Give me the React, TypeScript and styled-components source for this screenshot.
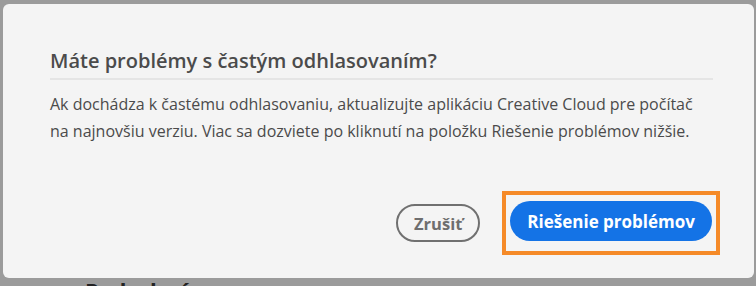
import React from "react";
import styled, { createGlobalStyle } from "styled-components";

const GlobalStyle = createGlobalStyle`
    html, body {
        margin: 0;
        padding: 0;
        background: #9b9b9b;
        overflow: hidden;
    }
    body {
        font-family: "Open Sans", "Noto Sans", sans-serif;
    }
`;

const Page = styled.div`
    display: flex;
    flex-flow: column;
    padding: 4px 2px 0 3px;
`;

const Dialog = styled.div`
    display: flex;
    flex-flow: column;
    width: 751px;
    height: 274px;
    box-sizing: border-box;
    background: #f4f4f4;
    border-radius: 6px;
    padding: 44px 41px 0 47px;
`;

const Title = styled.h2`
    margin: 0;
    font-size: 20px;
    font-weight: 600;
    color: #4b4b4b;
    line-height: 26px;
    padding-bottom: 4px;
    border-bottom: 2px solid #e5e5e5;
`;

const Body = styled.p`
    margin: 11px 0 0;
    font-size: 16px;
    line-height: 27px;
    color: #4b4b4b;
    white-space: nowrap;
`;

const Footer = styled.div`
    display: flex;
    justify-content: flex-end;
    align-items: center;
    gap: 22px;
    margin-top: auto;
    margin-right: -7px;
    margin-bottom: 23px;
`;

const Highlight = styled.div`
    display: flex;
    padding: 6px 4px 10px;
    border: 4px solid #f58a28;
`;

const Button = styled.button<{ $primary?: boolean }>`
    font-family: inherit;
    font-size: ${(p) => (p.$primary ? "17px" : "16.5px")};
    font-weight: 700;
    height: ${(p) => (p.$primary ? "40px" : "38px")};
    border-radius: 20px;
    padding: ${(p) => (p.$primary ? "0 17px" : "0 16px")};
    border: ${(p) => (p.$primary ? "none" : "2px solid #707070")};
    background: ${(p) => (p.$primary ? "#1473e6" : "transparent")};
    color: ${(p) => (p.$primary ? "#ffffff" : "#6e6e6e")};
    cursor: pointer;
`;

const Behind = styled.div`
    margin: 0 0 0 82px;
    font-size: 22px;
    font-weight: 700;
    color: #222222;
    line-height: 24px;
`;

const App: React.FC = () => {
    return (
        <Page>
            <GlobalStyle />
            <Dialog>
                <Title>Máte problémy s častým odhlasovaním?</Title>
                <Body>
                    Ak dochádza k častému odhlasovaniu, aktualizujte aplikáciu Creative Cloud pre počítač
                    <br />
                    na najnovšiu verziu. Viac sa dozviete po kliknutí na položku Riešenie problémov nižšie.
                </Body>
                <Footer>
                    <Button>Zrušiť</Button>
                    <Highlight>
                        <Button $primary>Riešenie problémov</Button>
                    </Highlight>
                </Footer>
            </Dialog>
            <Behind>Podrobné</Behind>
        </Page>
    );
};

export default App;
